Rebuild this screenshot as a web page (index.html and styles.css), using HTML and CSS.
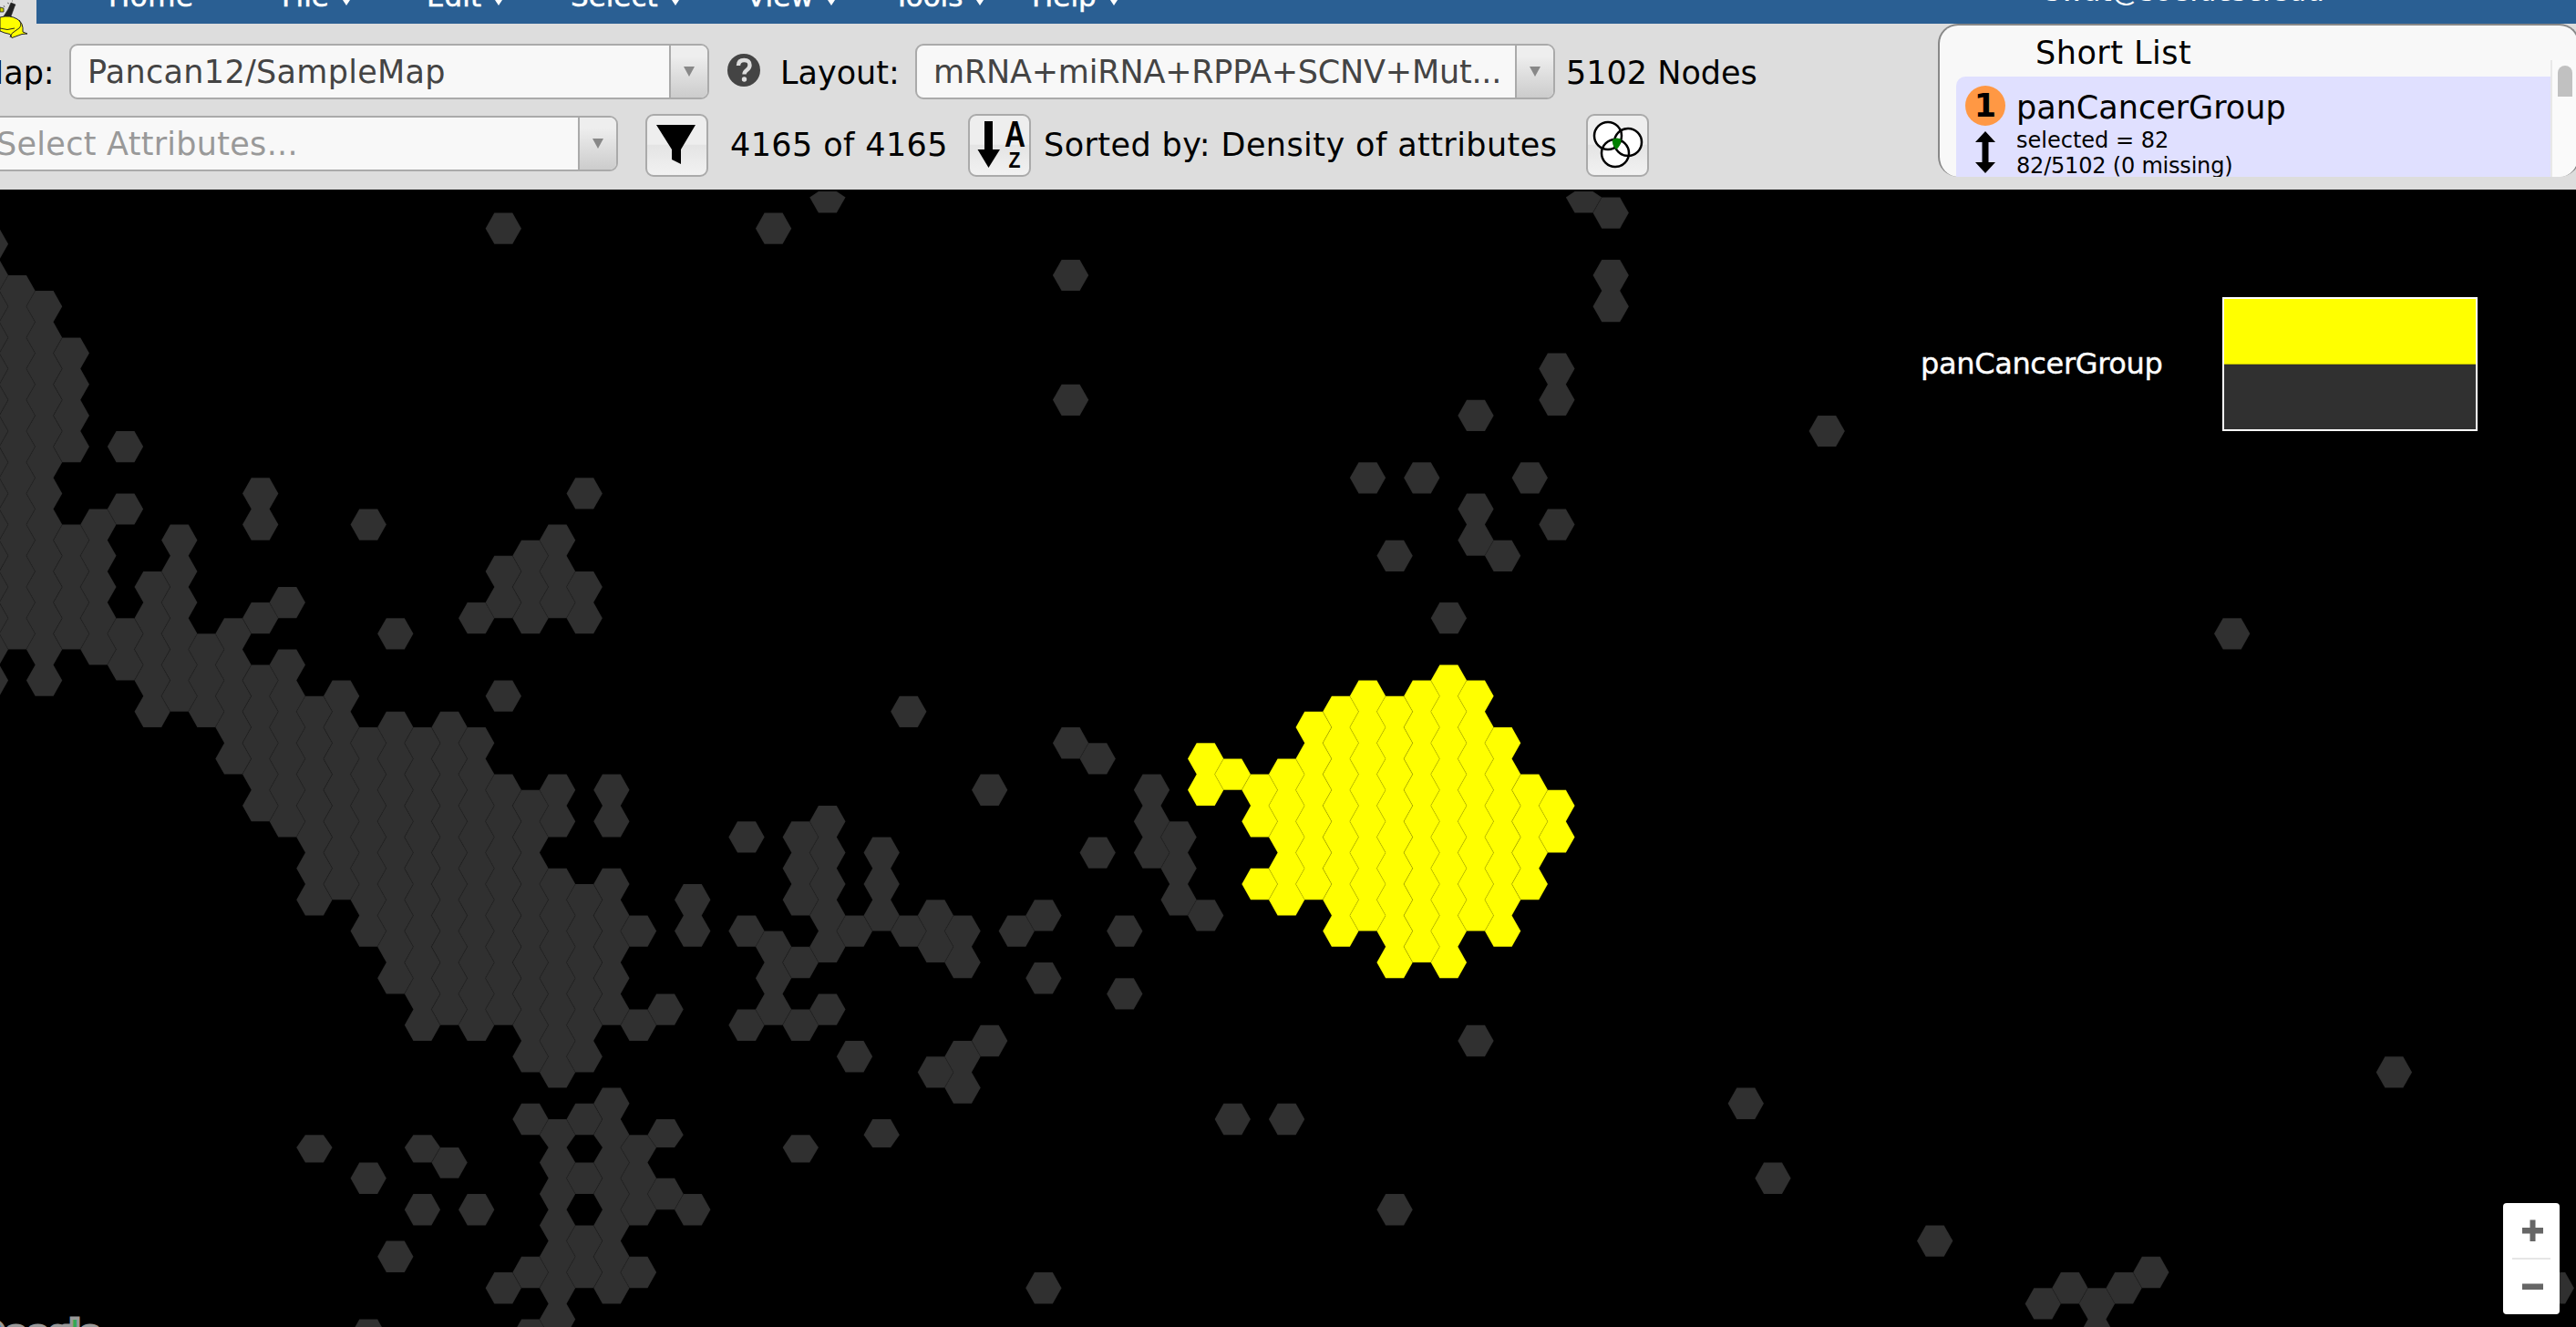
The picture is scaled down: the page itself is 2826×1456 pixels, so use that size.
FILE: index.html
```html
<!DOCTYPE html>
<html lang="en">
<head>
<meta charset="utf-8">
<title>Pancan12/SampleMap</title>
<link rel="stylesheet" href="styles.css">
</head>
<body>
<header class="header">
  <svg class="logo" width="40" height="60" viewBox="0 0 40 60">
    <path d="M0 8l4 1v4H0z" fill="#cfd400" stroke="#222" stroke-width=".8"/>
    <path d="M4 18L9 10l3-7 5 2-1 2-4 11zM8 3l2 1M4 6l1 2M13 1h1" fill="#222" stroke="#222" stroke-width=".6"/>
    <path d="M0 19q11-3 19 2 7 4 6 14l5 2-6 .5-11 4-2-4-6-1.500L0 34z" fill="#ff0" stroke="#222" stroke-width="1"/>
    <path d="M0 31q8 3 16 0M21 22q5 7-3 11-6 3-7 8" fill="none" stroke="#222"/>
  </svg>
  <nav class="nav">
    <span class="item home">Home</span>
    <span class="item file">File<i class="tri"></i></span>
    <span class="item edit">Edit<i class="tri"></i></span>
    <span class="item sel">Select<i class="tri"></i></span>
    <span class="item view">View<i class="tri"></i></span>
    <span class="item tools">Tools<i class="tri"></i></span>
    <span class="item help">Help<i class="tri"></i></span>
    <span class="item user">swat@soe.ucsc.edu</span>
  </nav>
  <div class="row row-map">
    <span class="label map-label">Map:</span>
    <div class="select"><span class="value v-map">Pancan12/SampleMap</span><span class="drop"></span></div>
    <svg class="help-icon" width="36" height="36" viewBox="0 0 36 36"><circle cx="18" cy="18" r="18" fill="#444"/><path d="M12 13q0-6 6.300-6t6.200 5.500q0 3-3 5.200t-3 4.800" fill="none" stroke="#ddd" stroke-width="4.400"/><circle cx="18.500" cy="28" r="2.700" fill="#ddd"/></svg>
    <span class="label layout-label">Layout:</span>
    <div class="select"><span class="value v-layout">mRNA+miRNA+RPPA+SCNV+Mut...</span><span class="drop"></span></div>
    <span class="label nodes">5102 Nodes</span>
  </div>
  <div class="row row-attr">
    <div class="select attr"><span class="value placeholder">Select Attributes...</span><span class="drop"></span></div>
    <span class="button filter"><svg width="65" height="65" viewBox="0 0 65 65"><path d="M10 10H53L37 37V53L27 48V37z"/></svg></span>
    <span class="label count">4165 of 4165</span>
    <span class="button sort"><svg width="65" height="65" viewBox="0 0 65 65"><path d="M16 6h9v31h8L20.500 57 8.500 37H16z"/><text x="38" y="34" class="az" textLength="23" lengthAdjust="spacingAndGlyphs">A</text><text x="42.500" y="57" class="az z" textLength="13" lengthAdjust="spacingAndGlyphs">Z</text></svg></span>
    <span class="label sorted">Sorted by: Density of attributes</span>
    <span class="button venn"><svg width="65" height="65" viewBox="0 0 65 65"><g fill="#fff"><circle cx="22" cy="22" r="15"/><circle cx="44" cy="29" r="15"/><circle cx="30" cy="41" r="15"/></g><g fill="none" stroke="#000" stroke-width="2.500"><circle cx="22" cy="22" r="15"/><circle cx="44" cy="29" r="15"/><circle cx="30" cy="41" r="15"/></g><path d="M27 26q5-3 9.500 0 0 7-5.500 11-5-5-4-11z" fill="#008000"/></svg></span>
  </div>
  <section class="shortlist">
    <h2 class="title">Short List</h2>
    <div class="entry">
      <div class="marks">
        <span class="badge">1</span>
        <svg width="24" height="46" viewBox="0 0 24 46"><path d="M12 0L23 12H15.500V34H23L12 46 1 34H8.500V12H1z"/></svg>
      </div>
      <div class="info">
        <div class="name">panCancerGroup</div>
        <div class="meta sel-meta">selected = 82</div>
        <div class="meta miss">82/5102 (0 missing)</div>
      </div>
    </div>
    <div class="scroll"><span class="thumb"></span></div>
  </section>
</header>
<main class="map">
  <svg class="hexes" viewBox="0 208 2826 1248" width="2826" height="1248"></svg>
  <div class="legend">
    <span class="legend-name">panCancerGroup</span>
    <div class="swatches"><span class="on"></span><span class="off"></span></div>
  </div>
  <div class="google"><span class="blue">G</span><span class="red">o</span><span class="gold">o</span><span class="blue">g</span><span class="green">l</span><span class="red">e</span></div>
  <div class="zoom">
    <svg width="62" height="122" viewBox="0 0 62 122"><path d="M21 27h8.500v-8.500h6V27H44v6.500h-8.500V42h-6v-8.500H21zM21 88.500h23V95H21z" fill="#666"/><path d="M10 60h42v2H10z" fill="#e6e6e6"/></svg>
  </div>
</main>
<script src="map.js"></script>
</body>
</html>
```
FILE: styles.css
```css
body { margin: 0; width: 2826px; height: 1456px; overflow: hidden; background: #000; font-family: "DejaVu Sans", Verdana, sans-serif; font-size: 35px; color: #000; }
.header { position: relative; height: 200px; padding-bottom: 8px; background: #ddd; overflow: hidden; }
.logo { position: absolute; left: 0; top: 0; }
.nav { height: 26px; margin-left: 40px; background: #2a5f93; overflow: hidden; position: relative; color: #fff; font-size: 31px; }
.item { position: absolute; top: -22px; line-height: 36px; white-space: nowrap; -webkit-text-stroke: .5px #fff; }
.tri { position: absolute; right: -25px; top: 19px; border: 6px solid transparent; border-top: 9px solid #fff; border-bottom: 0; }
.home { left: 79px; letter-spacing: .5px; } .file { left: 269px; } .edit { left: 428px; } .sel { left: 586px; }
.view { left: 779px; } .tools { left: 940px; } .help { left: 1092px; } .user { left: 2204px; top: -28px; -webkit-text-stroke: 0; }
.row { display: flex; align-items: center; position: relative; }
.row-map { height: 61px; margin-top: 22px; }
.row-attr { height: 70px; margin-top: 15px; }
.label, .value, .title, .name, .meta { white-space: nowrap; line-height: 42px; }
.row-map .label { padding-top: 2px; }
.map-label { width: 90px; margin-left: -26px; }
.map-label + .select { margin-left: 12px; }
.select { box-sizing: border-box; width: 702px; height: 61px; border: 2px solid #aaa; border-radius: 9px; background: #f8f8f8; color: #444; display: flex; overflow: hidden; flex: none; }
.value { flex: 1; padding-left: 18px; line-height: 59px; overflow: hidden; }
.v-map { letter-spacing: .3px; }
.v-layout { letter-spacing: -.2px; }
.drop { width: 40px; border-left: 2px solid #aaa; background: linear-gradient(#eee 20%, #ccc); display: flex; align-items: center; justify-content: center; }
.drop::after { content: ""; border: 6.500px solid transparent; border-top: 11px solid #888; border-bottom: 0; }
.help-icon { margin-left: 20px; margin-bottom: 3px; flex: none; }
.layout-label { width: 148px; margin-left: 22px; }
.nodes { margin-left: 12px; }
.attr { margin-left: -24px; margin-bottom: 4px; }
.placeholder { color: #999; letter-spacing: .28px; }
.button { box-sizing: border-box; width: 69px; height: 69px; border: 2px solid #aaa; border-radius: 9px; background: linear-gradient(#eee 48%, #e4e4e4 50%, #f2f2f2); flex: none; }
.button svg { display: block; }
.filter { margin-left: 30px; }
.count { margin-left: 24px; width: 261px; letter-spacing: .4px; }
.sorted { margin-left: 14px; width: 595px; letter-spacing: .42px; }
.az { font: bold 40px "Liberation Sans", sans-serif; }
.z { font-size: 24px; }
.shortlist { position: absolute; left: 2126px; top: 26px; box-sizing: border-box; width: 704px; height: 168px; border: 2px solid #888; border-bottom: 0; border-radius: 22px; background: #f8f8f8; overflow: hidden; }
.title { margin: 9px 0 0 105px; font-size: 35px; font-weight: normal; height: 47px; letter-spacing: .5px; }
.entry { margin-left: 18px; width: 652px; height: 112px; border-radius: 10px 0 0 0; background: #e0e0ff; display: flex; }
.marks { width: 44px; margin-left: 10px; padding-top: 10px; display: flex; flex-direction: column; align-items: center; gap: 6px; }
.badge { width: 44px; height: 44px; border-radius: 50%; background: #ff9844; font-weight: bold; line-height: 44px; text-align: center; }
.info { margin-left: 12px; padding-top: 13px; }
.name { height: 42px; }
.meta { font-size: 24px; line-height: 28px; }
.sel-meta { margin-top: 1px; }
.miss { letter-spacing: -.2px; }
.scroll { position: absolute; left: 670px; top: 38px; width: 30px; height: 130px; background: #fafafa; border-left: 2px solid #e8e8e8; }
.thumb { position: absolute; left: 6px; top: 6px; width: 16px; height: 34px; border-radius: 8px 8px 0 0; background: #c1c1c1; }
.map { position: relative; height: 1248px; background: #000; overflow: hidden; }
.hexes { display: block; }
.gray { fill: #303030; stroke: rgba(0,0,0,.08); stroke-width: 1.200px; }
.yellow { fill: #ff0; stroke: rgba(0,0,0,.08); stroke-width: 1.200px; }
.legend { position: absolute; right: 108px; top: 118px; display: flex; align-items: center; color: #fff; font-size: 32px; }
.legend-name { width: 331px; line-height: 40px; letter-spacing: -.35px; padding-bottom: 1px; -webkit-text-stroke: .4px #fff; }
.swatches { width: 276px; border: 2px solid #fff; }
.on, .off { display: block; height: 71px; }
.on { background: #ff0; border-bottom: 1px solid #bb0; }
.off { background: #303030; }
.google { position: absolute; left: -28px; top: 1234px; font: 43px/44px "Liberation Sans", sans-serif; -webkit-text-stroke: 7px #999; paint-order: stroke fill; }
.blue { color: #4285f4; } .red { color: #ea4335; } .gold { color: #fbbc05; } .green { color: #34a853; }
.zoom { position: absolute; left: 2746px; top: 1112px; width: 62px; height: 122px; border-radius: 4px; background: #fff; }
```
FILE: map.js
```js
// Each run is [column, first half-row, number of stacked hexagons].
const gray = [
  [-1,-3,15],[0,0,12],[1,1,13],[2,4,4],[2,16,4],[3,15,5],[4,10,1],[4,14,1],[4,22,2],[5,19,5],[6,16,6],[7,23,3],[8,22,5],
  [9,13,2],[9,21,1],[9,25,5],[10,20,1],[10,24,6],[11,27,7],[11,55,1],[12,26,7],[13,15,1],[13,29,7],[13,57,1],[13,67,1],
  [14,22,1],[14,28,9],[14,62,1],[15,29,10],[15,55,1],[15,59,1],[16,28,10],[16,56,1],[17,21,1],[17,29,10],[17,59,1],
  [18,-4,1],[18,18,2],[18,26,1],[18,32,8],[18,64,1],[19,17,3],[19,33,9],[19,53,1],[19,63,1],[19,67,1],
  [20,16,3],[20,32,2],[20,38,7],[20,54,7],[21,13,1],[21,19,2],[21,39,6],[21,53,1],[21,57,1],[21,61,2],
  [22,32,2],[22,38,5],[22,52,7],[23,41,1],[23,47,1],[23,55,3],[23,63,1],[24,46,1],[24,54,1],[24,58,1],[25,39,2],[25,59,1],
  [27,35,1],[27,41,1],[27,47,1],[28,-4,1],[28,42,3],[29,35,3],[29,43,1],[29,47,1],[29,55,1],[30,-6,1],[30,34,5],[30,46,1],
  [31,41,1],[31,49,1],[32,36,3],[32,54,1],[33,27,1],[33,41,1],[34,40,2],[34,50,1],[35,41,2],[35,49,2],[36,32,1],[36,48,1],
  [37,41,1],[38,40,1],[38,44,1],[38,64,1],[39,-1,1],[39,7,1],[39,29,1],[40,30,1],[40,36,1],[41,41,1],[41,45,1],
  [42,32,3],[43,35,3],[44,40,1],[45,53,1],[47,53,1],[50,12,1],[51,17,1],[51,59,1],[52,12,1],[53,21,1],[54,8,1],[54,14,2],
  [54,48,1],[55,17,1],[56,12,1],[57,5,2],[57,15,1],[58,-6,1],[59,-5,1],[59,-1,2],[64,52,1],[65,57,1],[67,9,1],[71,61,1],
  [75,65,1],[76,64,1],[77,65,2],[78,64,1],[79,63,1],[82,22,1],[88,50,1],[94,64,1]
];
const yellow = [
  [44,30,2],[45,31,1],[46,32,2],[46,38,1],[47,31,5],[48,28,6],[49,27,8],[50,26,8],[51,27,9],[52,26,9],[53,25,10],
  [54,26,8],[55,29,7],[56,32,4],[57,33,2]
];

// Half-row index to y; the tile boundary falls at half-row 56.
function rowY(h) {
  if (h <= 29) return 302 + 17.1 * h;
  if (h <= 55) return 798 + 17.2 * (h - 29);
  if (h === 56) return 1259;
  return 1275.6 + 17.2 * (h - 57);
}

function runPath([col, top, count]) {
  const cx = 19 + 29.63 * col;
  const right = [], left = [];
  for (let i = 0; i <= count * 2; i++) {
    const half = i % 2 ? 19.7 : 10;
    const y = Math.max(210, rowY(top + i)).toFixed(1);
    right.push((cx + half).toFixed(1) + " " + y);
    left.unshift((cx - half).toFixed(1) + " " + y);
  }
  return "M" + right.concat(left).join("L") + "Z";
}

const svg = document.querySelector(".hexes");
for (const [name, runs] of [["gray", gray], ["yellow", yellow]]) {
  for (const run of runs) {
    const path = document.createElementNS("http://www.w3.org/2000/svg", "path");
    path.setAttribute("d", runPath(run));
    path.setAttribute("class", name);
    svg.appendChild(path);
  }
}
```
